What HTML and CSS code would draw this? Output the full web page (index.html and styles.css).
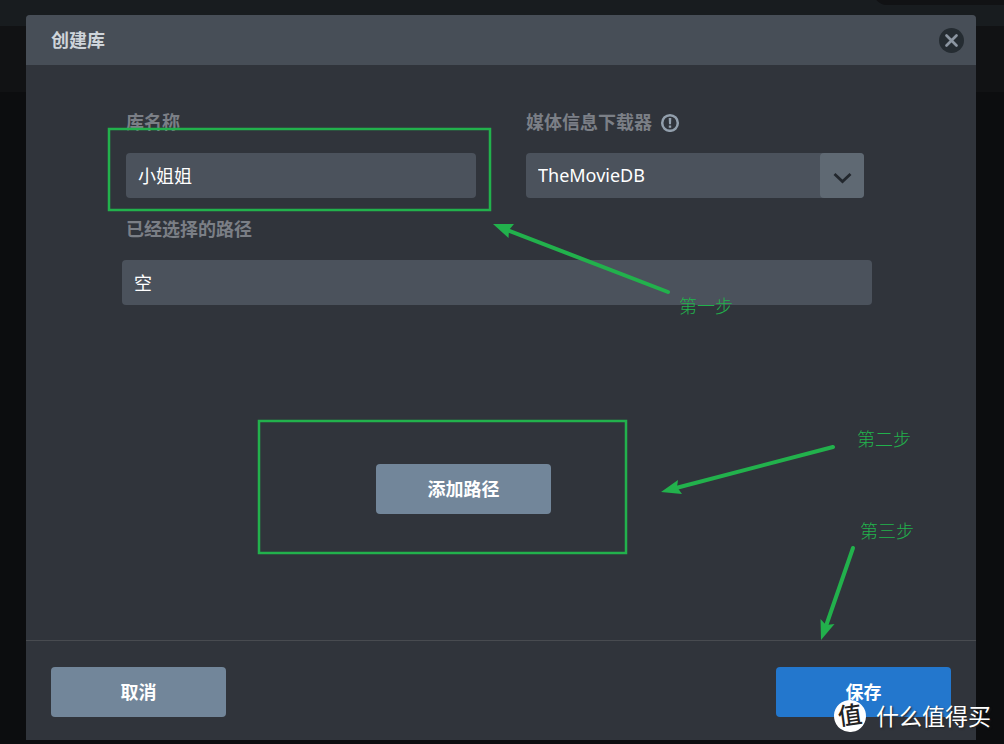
FILE: index.html
```
<!DOCTYPE html>
<html lang="zh-CN">
<head>
<meta charset="utf-8">
<meta name="viewport" content="width=device-width, initial-scale=1">
<title>创建库</title>
<link rel="stylesheet" href="styles.css">
</head>
<body>
<div class="page">
  <div class="page-pill"></div>
  <form class="dialog" role="dialog" aria-labelledby="dialog-title">
    <header class="dialog-header">
      <h1 class="dialog-title" id="dialog-title">创建库</h1>
      <button class="close" type="button" aria-label="关闭">
        <svg width="25" height="25" viewBox="0 0 25 25"><path d="M7.500 7.500l10 10M17.500 7.500l-10 10" stroke="#8b95a1" stroke-width="2.700" stroke-linecap="round"/></svg>
      </button>
    </header>
    <div class="dialog-body">
      <div class="row">
        <div class="field">
          <label class="label" for="name">库名称</label>
          <input class="control" id="name" type="text" value="小姐姐">
        </div>
        <div class="field">
          <div class="label-line">
            <label class="label" for="source">媒体信息下载器</label>
            <svg class="info" width="20" height="20" viewBox="0 0 20 20"><circle cx="10" cy="11" r="7.800" fill="none" stroke="#929fac" stroke-width="2.500"/><path d="M8.700 6h2.600l-.3 6.200H9zM8.800 13.500h2.400v2.200H8.800z" fill="#929fac"/></svg>
          </div>
          <div class="select">
            <select class="control" id="source"><option>TheMovieDB</option></select>
            <span class="select-arrow">
              <svg width="20" height="12" viewBox="0 0 20 12"><path d="M2.500 2l8 7.500L18.500 2" fill="none" stroke="#22272d" stroke-width="2.800"/></svg>
            </span>
          </div>
        </div>
      </div>
      <div class="field paths">
        <label class="label paths-label" for="paths">已经选择的路径</label>
        <input class="control" id="paths" type="text" value="空" readonly>
      </div>
      <button class="button add" type="button">添加路径</button>
    </div>
    <footer class="dialog-footer">
      <button class="button" type="button">取消</button>
      <button class="button primary" type="submit">保存</button>
    </footer>
  </form>

  <svg class="notes" width="1004" height="744" viewBox="0 0 1004 744" aria-hidden="true">
    <g fill="none" stroke="#22b14c" stroke-width="2.500">
      <rect x="109" y="129" width="381" height="81"/>
      <rect x="259" y="421" width="367" height="132"/>
    </g>
    <g stroke="#22b14c" stroke-width="4" stroke-linecap="round">
      <path d="M507 230L668 292"/>
      <path d="M676 488L833 447"/>
      <path d="M826 626L853 548"/>
    </g>
    <g fill="#22b14c">
      <path d="M493 224L514 224L509 230L508.500 238z"/>
      <path d="M661 492L678 480L677 487L682 494z"/>
      <path d="M821 640L820.500 619L826 625L834.500 624z"/>
    </g>
  </svg>
  <span class="note note-one">第一步</span>
  <span class="note note-two">第二步</span>
  <span class="note note-three">第三步</span>

  <div class="watermark"><span class="watermark-logo">值</span><span>什么值得买</span></div>
</div>
</body>
</html>
```
FILE: styles.css
```
* {
  box-sizing: border-box;
}

body {
  margin: 0;
  color: #fff;
  font-family: "Noto Sans", "Noto Sans CJK SC", sans-serif;
  font-size: 18px;
  line-height: 30px;
}

.page {
  position: relative;
  display: flex;
  min-height: 100vh;
  padding: 15px 28px 4px 26px;
  overflow: hidden;
  background: linear-gradient(#181c1f 26px, #111214 26px, #111214 92px, #0c0d0f 92px);
}

.page-pill {
  position: absolute;
  top: -20px;
  right: -20px;
  width: 150px;
  height: 25px;
  border-radius: 13px;
  background: #111214;
}

.dialog {
  display: flex;
  flex: 1;
  flex-direction: column;
  border-radius: 4px 4px 0 0;
  background: #30343b;
}

.dialog-header {
  display: flex;
  align-items: center;
  justify-content: space-between;
  height: 50px;
  padding: 0 12px 0 25px;
  border-radius: 4px 4px 0 0;
  background: #474e57;
}

.dialog-title {
  margin: 0;
  color: #ced4da;
  font-size: 18px;
  font-weight: 700;
}

.close {
  display: flex;
  padding: 0;
  border: 0;
  border-radius: 50%;
  background: #252c32;
}

.dialog-body {
  flex: 1;
  padding: 42px 104px 24px 96px;
}

.row {
  display: grid;
  grid-template-columns: 350fr 338fr;
  gap: 50px;
  padding: 0 8px 0 4px;
}

.field {
  display: flex;
  flex-direction: column;
  gap: 16px;
  min-width: 0;
}

.paths {
  margin-top: 16px;
}

.label-line {
  display: flex;
  align-items: center;
  gap: 8px;
}

.label {
  color: #7b7f86;
  font-weight: 700;
}

.paths-label {
  padding-left: 4px;
}

.control {
  width: 100%;
  height: 45px;
  padding: 0 12px 2px;
  border: 0;
  border-radius: 4px;
  appearance: none;
  background: #4b525c;
  color: #fff;
  font: inherit;
}

.select {
  position: relative;
}

.select .control {
  display: block;
}

.select-arrow {
  position: absolute;
  inset: 0 0 0 auto;
  display: flex;
  align-items: center;
  justify-content: center;
  width: 44px;
  padding-top: 4px;
  border-radius: 4px;
  background: #5f6973;
  pointer-events: none;
}

.button {
  width: 175px;
  height: 50px;
  padding: 0;
  border: 0;
  border-radius: 4px;
  background: #72869a;
  color: #fff;
  font: inherit;
  font-weight: 700;
}

.add {
  display: block;
  margin: 159px 0 0 254px;
}

.primary {
  background: #2377cd;
}

.dialog-footer {
  display: flex;
  justify-content: space-between;
  padding: 26px 25px 23px;
  border-top: 1px solid #484b50;
}

.notes {
  position: absolute;
  top: 0;
  left: 0;
  pointer-events: none;
}

.note {
  position: absolute;
  color: #22b14c;
  font-family: "Noto Sans CJK SC", sans-serif;
  font-weight: 300;
}

.note-one {
  top: 290px;
  left: 679px;
}

.note-two {
  top: 423px;
  left: 857px;
}

.note-three {
  top: 515px;
  left: 860px;
}

.watermark {
  position: absolute;
  right: 13px;
  bottom: 12px;
  display: flex;
  align-items: center;
  gap: 10px;
  font-size: 23px;
  line-height: 32px;
  text-shadow: 1px 1px 2px #222;
}

.watermark-logo {
  width: 32px;
  height: 32px;
  border-radius: 50%;
  background: #fff;
  color: #222;
  font-size: 24px;
  font-weight: 500;
  line-height: 30px;
  text-align: center;
  text-shadow: none;
  transform: rotate(-8deg);
}
```
